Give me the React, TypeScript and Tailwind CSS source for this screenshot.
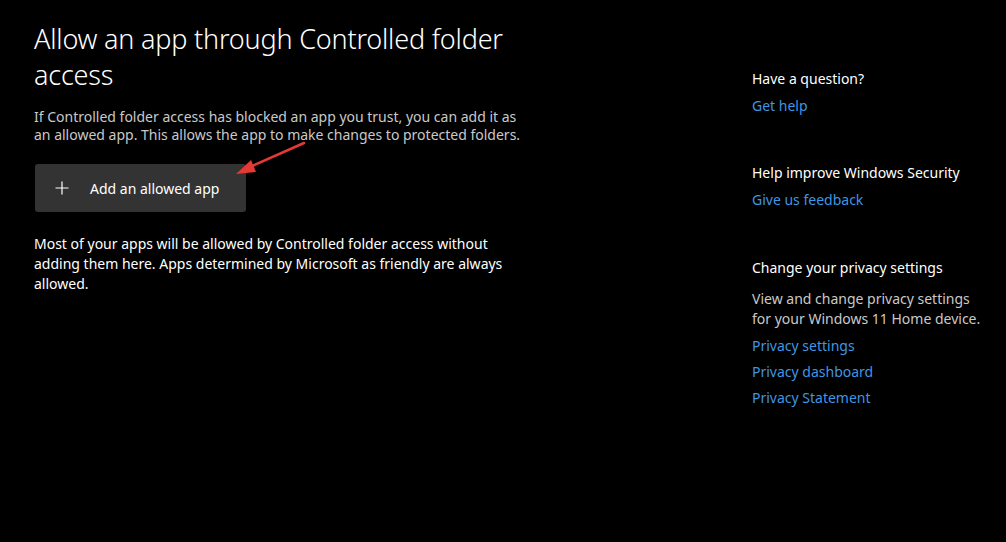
import React from 'react';

const font = { fontFamily: '"Noto Sans", "Open Sans", sans-serif' };

const HelpLink = ({ children }: { children: React.ReactNode }) => (
    <a href="#" className="block text-[#3f96e4] text-[14px] leading-[20px]">{children}</a>
);

const App = () => {
    return (
        <div className="w-[1006px] h-[542px] bg-black text-white overflow-hidden flex" style={font}>
            {/* main column */}
            <div className="w-[752px] shrink-0 pl-[34px] pt-[21px] relative">
                <h1 className="text-[27px] leading-[36px] font-light w-[490px] tracking-[-0.2px]">
                    Allow an app through Controlled folder access
                </h1>
                <p className="mt-[15px] text-[14px] leading-[18px] text-[#c9c9c9] w-[500px]">
                    If Controlled folder access has blocked an app you trust, you can add it as an allowed app. This allows the app to make changes to protected folders.
                </p>
                <button className="mt-[20px] ml-[1px] w-[211px] h-[48px] bg-[#333333] rounded-[3px] flex items-center pl-[20px] text-[14px]">
                    <svg width="14" height="14" viewBox="0 0 14 14" className="mr-[21px]">
                        <path d="M7 0.5V13.5M0.5 7H13.5" stroke="white" strokeWidth="1.2" />
                    </svg>
                    Add an allowed app
                </button>
                <p className="mt-[22px] text-[14px] leading-[20px] w-[475px]">
                    Most of your apps will be allowed by Controlled folder access without adding them here. Apps determined by Microsoft as friendly are always allowed.
                </p>
                {/* red annotation arrow */}
                <svg className="absolute left-0 top-0 pointer-events-none" width="320" height="200">
                    <line x1="304" y1="143" x2="250" y2="167" stroke="#e53935" strokeWidth="2.5" strokeLinecap="round" />
                    <polygon points="236,174 251,160 256,172" fill="#e53935" />
                </svg>
            </div>

            {/* side column */}
            <div className="pt-[69px] w-[240px]">
                <div className="text-[14px] leading-[20px]">Have a question?</div>
                <div className="mt-[7px]"><HelpLink>Get help</HelpLink></div>

                <div className="mt-[47px] text-[14px] leading-[20px]">Help improve Windows Security</div>
                <div className="mt-[7px]"><HelpLink>Give us feedback</HelpLink></div>

                <div className="mt-[48px] text-[14px] leading-[20px]">Change your privacy settings</div>
                <p className="mt-[11px] text-[14px] leading-[20px] text-[#c9c9c9] w-[235px]">
                    View and change privacy settings for your Windows 11 Home device.
                </p>
                <div className="mt-[7px] flex flex-col gap-[6px]">
                    <HelpLink>Privacy settings</HelpLink>
                    <HelpLink>Privacy dashboard</HelpLink>
                    <HelpLink>Privacy Statement</HelpLink>
                </div>
            </div>
        </div>
    );
};

export default App;
